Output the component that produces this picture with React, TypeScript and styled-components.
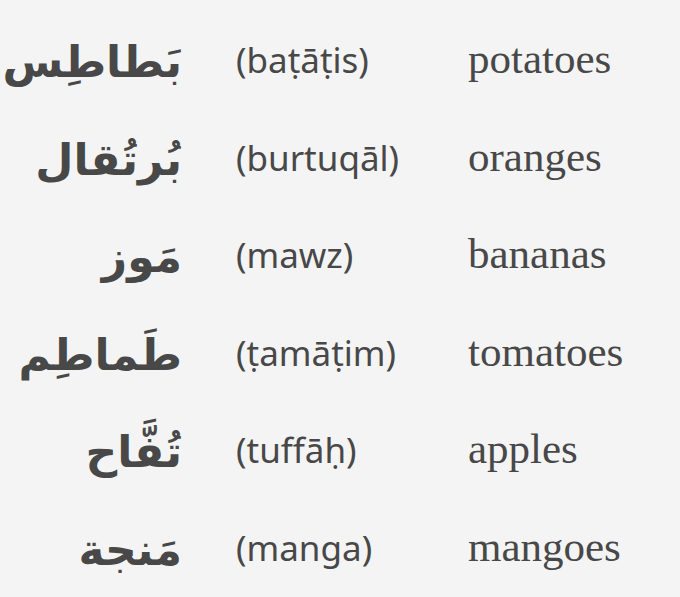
import React from "react";
import styled, { createGlobalStyle } from "styled-components";

const GlobalStyle = createGlobalStyle`
  html, body {
    margin: 0;
    padding: 0;
    background: #f4f4f4;
  }
`;

const Page = styled.div`
  width: 680px;
  height: 597px;
  overflow: hidden;
  background: #f4f4f4;
  color: #484848;
  padding-top: 32px;
  box-sizing: border-box;
`;

const Row = styled.div`
  display: grid;
  grid-template-columns: 182px 178px auto;
  column-gap: 54px;
  align-items: baseline;
  height: 97.6px;
`;

const Arabic = styled.span`
  direction: rtl;
  text-align: right;
  font-family: "DejaVu Sans", sans-serif;
  font-weight: bold;
  font-size: 44px;
  position: relative;
  top: 4px;
`;

const Translit = styled.span`
  font-family: "Noto Sans", "Open Sans", sans-serif;
  font-size: 35px;
`;

const English = styled.span`
  font-family: "Liberation Serif", serif;
  font-size: 43px;
`;

const words = [
  { ar: "بَطاطِس", tr: "(baṭāṭis)", en: "potatoes" },
  { ar: "بُرتُقال", tr: "(burtuqāl)", en: "oranges" },
  { ar: "مَوز", tr: "(mawz)", en: "bananas" },
  { ar: "طَماطِم", tr: "(ṭamāṭim)", en: "tomatoes" },
  { ar: "تُفَّاح", tr: "(tuffāḥ)", en: "apples" },
  { ar: "مَنجة", tr: "(manga)", en: "mangoes" },
];

export default function App() {
  return (
    <Page>
      <GlobalStyle />
      {words.map((w) => (
        <Row key={w.en}>
          <Arabic lang="ar">{w.ar}</Arabic>
          <Translit>{w.tr}</Translit>
          <English>{w.en}</English>
        </Row>
      ))}
    </Page>
  );
}
